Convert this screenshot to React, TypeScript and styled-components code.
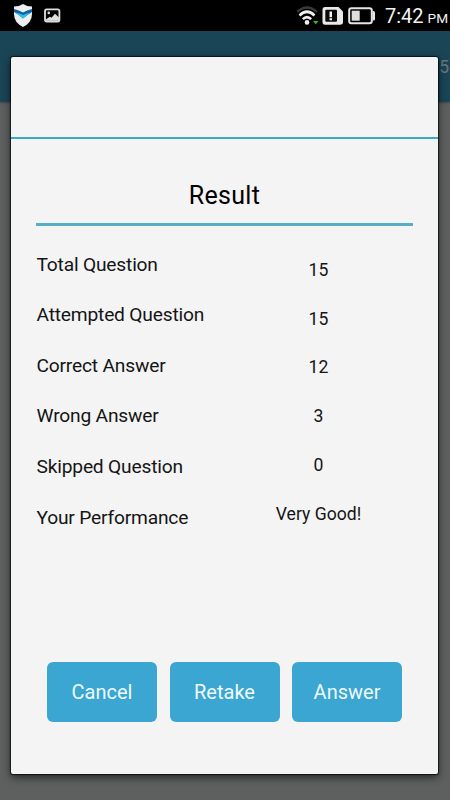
import React from "react";
import styled, { createGlobalStyle } from "styled-components";

const GlobalStyle = createGlobalStyle`
  * { box-sizing: border-box; }
  body { margin: 0; background: #5e605f; font-family: Roboto, "Noto Sans", sans-serif; }
`;

const Screen = styled.div`
  position: relative;
  width: 450px;
  height: 800px;
  overflow: hidden;
  background: #5e605f;
`;

const StatusBar = styled.header`
  display: flex;
  justify-content: space-between;
  height: 31px;
  background: #000;
  color: #f2f2f2;
`;

const StatusGroup = styled.div`
  display: flex;
  gap: 9px;
`;

const Clock = styled.div`
  display: flex;
  align-items: baseline;
  gap: 4px;
  width: 64px;
  margin-right: 1px;
  font-size: 20px;
  line-height: 33px;
  white-space: nowrap;
`;

const Meridiem = styled.span`
  font-size: 13.6px;
`;

const AppBar = styled.div`
  display: flex;
  justify-content: flex-end;
  height: 71px;
  padding-right: 1px;
  background: #1a4556;
  color: #6a777d;
  font-size: 17.5px;
  line-height: 73px;
  box-shadow: 0 1px 2px rgba(0, 0, 0, 0.3);
`;

const Dialog = styled.section`
  position: absolute;
  left: 11px;
  top: 57px;
  display: flex;
  flex-direction: column;
  width: 427px;
  height: 717px;
  border-radius: 2px;
  background: #f4f4f4;
  box-shadow: 0 0 1px 1px rgba(0, 0, 0, 0.65), 0 3px 8px rgba(0, 0, 0, 0.65);
`;

const DialogHeader = styled.div`
  height: 82px;
  border-bottom: 2px solid #3ba9c8;
`;

const Title = styled.h1`
  height: 87px;
  margin: 0 25px;
  padding-top: 39px;
  border-bottom: 3px solid #55aec4;
  color: #000;
  font-size: 25px;
  font-weight: 400;
  letter-spacing: 0.3px;
  line-height: 36px;
  text-align: center;
`;

const Results = styled.div`
  display: flex;
  height: 380px;
  padding: 13.6px 25px 0 25.5px;
  color: #151515;
`;

const Labels = styled.div`
  width: 188px;
  font-size: 19.2px;
  letter-spacing: -0.19px;
  line-height: 50.6px;
  white-space: nowrap;
`;

const Values = styled.div`
  width: 188px;
  padding-top: 6.4px;
  font-size: 17.6px;
  line-height: 48.7px;
  text-align: center;
`;

const Actions = styled.div`
  display: flex;
  gap: 12.5px;
  margin: 56.4px 36px 0;
`;

const Button = styled.button`
  flex: 1;
  height: 60px;
  padding: 0;
  border: 0;
  border-radius: 6px;
  background: #3ba6d1;
  color: #eefaff;
  font: 400 20px/61px Roboto, sans-serif;
`;

const results = [
  ["Total Question", "15"],
  ["Attempted Question", "15"],
  ["Correct Answer", "12"],
  ["Wrong Answer", "3"],
  ["Skipped Question", "0"],
  ["Your Performance", "Very Good!"],
];

const NoticeIcons = () => (
  <svg width="70" height="31" viewBox="0 0 70 31">
    <path d="M14 6.5 Q19 6.5 23 4 Q27 6.5 32 6.5 V14 Q32 22.5 23 27 Q14 22.5 14 14Z" fill="#eceef0" />
    <path d="M14 9 Q19 10 23 12.5 Q27 10 32 9 V12 Q27 15 23 18.5 Q18 14 14 12Z" fill="#176098" />
    <path d="M15 12.5 Q20 13 23 15 Q27 13 31 12.5 Q27 15 23 18.5 Q19 15 15 12.5Z" fill="#23c4ef" />
    <rect x="45" y="9.3" width="14.4" height="12.2" rx="1.8" fill="none" stroke="#dedede" strokeWidth="1.8" />
    <circle cx="48.8" cy="12.9" r="1.3" fill="#dedede" />
    <path d="M46 19.3 L50 16.8 L51.5 17.8 L55 13.8 L59 17.5 V20.8 H46Z" fill="#dedede" />
  </svg>
);

const SystemIcons = () => (
  <svg width="80" height="31" viewBox="296 0 80 31">
    <g fill="none" strokeLinecap="butt">
      <path d="M297.2 12 Q307 3 317 12" stroke="#393939" strokeWidth="2.2" />
      <path d="M299.5 15.5 Q307 8 314.5 15.5" stroke="#f0f0f0" strokeWidth="2.6" />
      <path d="M302.8 19.2 Q307 15 311.2 19.2" stroke="#f0f0f0" strokeWidth="2.5" />
    </g>
    <circle cx="307" cy="22.4" r="2.3" fill="#f0f0f0" />
    <path d="M313 21 H318.5 L315.7 24.5Z" fill="#3faf28" />
    <path d="M325 7 H338.5 L343 11.5 V22 Q343 24.7 340 24.7 H325 Q322.5 24.7 322.5 22.5 V9.5 Q322.5 7 325 7Z" fill="#e9e9e9" />
    <rect x="325.3" y="9.8" width="11.7" height="12" rx="1" fill="#0a0a0a" />
    <path d="M329.5 11.5 H332 V17.3 H329.5Z M329.5 18.3 H332 V20.3 H329.5Z" fill="#f4f4f4" />
    <rect x="349.2" y="8.2" width="22.6" height="15" rx="2.2" fill="none" stroke="#e5e5e5" strokeWidth="2" />
    <path d="M372.5 11 H373.5 Q375 11 375 12.5 V19 Q375 20.5 373.5 20.5 H372.5Z" fill="#e5e5e5" />
    <rect x="351.7" y="10.7" width="8" height="10" fill="#dedede" />
  </svg>
);

export default function App() {
  return (
    <>
      <GlobalStyle />
      <Screen>
        <StatusBar>
          <NoticeIcons />
          <StatusGroup>
            <SystemIcons />
            <Clock>7:42<Meridiem>PM</Meridiem></Clock>
          </StatusGroup>
        </StatusBar>
        <AppBar>5</AppBar>
        <Dialog>
          <DialogHeader />
          <Title>Result</Title>
          <Results>
            <Labels>{results.map(([label]) => <div key={label}>{label}</div>)}</Labels>
            <Values>{results.map(([label, value]) => <div key={label}>{value}</div>)}</Values>
          </Results>
          <Actions>
            <Button>Cancel</Button>
            <Button>Retake</Button>
            <Button>Answer</Button>
          </Actions>
        </Dialog>
      </Screen>
    </>
  );
}
